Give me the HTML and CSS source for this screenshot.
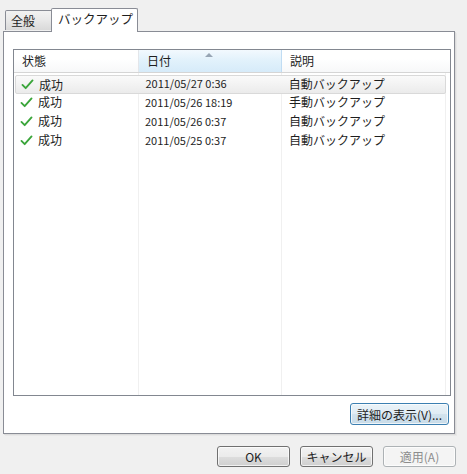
FILE: index.html
```html
<!DOCTYPE html>
<html lang="ja">
<head>
    <meta charset="UTF-8">
    <title>バックアップ</title>
    <link rel="stylesheet" href="styles.css">
</head>
<body>
    <div class="dialog">

        <div class="tabs">
            <div class="tab">全般</div>
            <div class="tab active">バックアップ</div>
        </div>

        <div class="panel">
            <div class="list">
                <div class="list-head">
                    <div class="col c-state">状態</div>
                    <div class="col c-date sorted">日付<span class="sort-arrow"></span></div>
                    <div class="col c-desc">説明</div>
                </div>
                <div class="list-body">
                    <div class="guides">
                        <div class="g c-state"></div>
                        <div class="g c-date"></div>
                        <div class="g c-desc"></div>
                    </div>

                    <div class="row hover">
                        <div class="cell c-state"><svg class="check" viewBox="0 0 14 12"><path d="M1.5 6.5 L5 10 L12.5 1.5" /></svg>成功</div>
                        <div class="cell c-date">2011/05/27 0:36</div>
                        <div class="cell c-desc">自動バックアップ</div>
                    </div>
                    <div class="row">
                        <div class="cell c-state"><svg class="check" viewBox="0 0 14 12"><path d="M1.5 6.5 L5 10 L12.5 1.5" /></svg>成功</div>
                        <div class="cell c-date">2011/05/26 18:19</div>
                        <div class="cell c-desc">手動バックアップ</div>
                    </div>
                    <div class="row">
                        <div class="cell c-state"><svg class="check" viewBox="0 0 14 12"><path d="M1.5 6.5 L5 10 L12.5 1.5" /></svg>成功</div>
                        <div class="cell c-date">2011/05/26 0:37</div>
                        <div class="cell c-desc">自動バックアップ</div>
                    </div>
                    <div class="row">
                        <div class="cell c-state"><svg class="check" viewBox="0 0 14 12"><path d="M1.5 6.5 L5 10 L12.5 1.5" /></svg>成功</div>
                        <div class="cell c-date">2011/05/25 0:37</div>
                        <div class="cell c-desc">自動バックアップ</div>
                    </div>
                </div>
            </div>

            <div class="panel-actions">
                <button class="btn focused wide">詳細の表示(V)...</button>
            </div>
        </div>

        <div class="actions">
            <button class="btn">OK</button>
            <button class="btn">キャンセル</button>
            <button class="btn" disabled>適用(A)</button>
        </div>

    </div>
</body>
</html>
```

FILE: styles.css
```css
body {
    margin: 0;
    background-color: #f0f0f0;
    font-family: "Noto Sans CJK JP", "Liberation Sans", sans-serif;
    font-size: 12px;
    color: #1e1e1e;
}
.dialog {
    width: 467px;
    height: 474px;
    padding: 8px 0 0 3px;
    box-sizing: border-box;
}

/* タブ */
.tabs {
    display: flex;
    align-items: flex-end;
    height: 23px;
    padding-left: 2px;
    position: relative;
    z-index: 1;
}
.tab {
    height: 20px;
    line-height: 19px;
    padding: 0 5px;
    width: 47px;
    box-sizing: border-box;
    border: 1px solid #898c95;
    border-bottom: none;
    background: linear-gradient(#f2f2f2, #e8e8e8 50%, #d9d9d9);
    border-radius: 2px 0 0 0;
    margin-bottom: 1px;
    white-space: nowrap;
}
.tab.active {
    width: 87px;
    height: 24px;
    margin-bottom: -1px;
    margin-left: -1px;
    padding: 0 6px;
    line-height: 20px;
    font-size: 12.5px;
    background: #fff;
    border-radius: 2px 2px 0 0;
}

/* 白いパネル */
.panel {
    width: 452px;
    height: 403px;
    box-sizing: border-box;
    border: 1px solid #898c95;
    background: #fff;
    padding: 17px 4px 0 9px;
    box-shadow: 1px 1px 0 #dcdcdc, 2px 2px 0 #e8e8e8;
}
.list {
    width: 438px;
    height: 347px;
    box-sizing: border-box;
    border: 1px solid #828790;
    display: flex;
    flex-direction: column;
}
.list-head {
    display: flex;
    height: 22px;
    border-bottom: 1px solid #d5d5d5;
    background: linear-gradient(#fff, #fff 40%, #f7f8f9);
}
.col {
    position: relative;
    line-height: 22px;
    padding-left: 8px;
    box-sizing: border-box;
    border-right: 1px solid #e3e6ea;
}
.col.sorted {
    background: linear-gradient(#f2f9fe, #e1f1fb 50%, #d6ebf9);
    border-right-color: #c0dcf3;
}
.sort-arrow {
    position: absolute;
    left: 66px;
    top: 3px;
    width: 0;
    height: 0;
    border-left: 4px solid transparent;
    border-right: 4px solid transparent;
    border-bottom: 4px solid #97a5b4;
}
.c-state { width: 125px; }
.c-date { width: 143px; }
.c-desc { width: 164px; }
.col.c-desc { border-right: none; }

.list-body {
    flex: 1;
    position: relative;
    padding-top: 2px;
}
.guides {
    position: absolute;
    inset: 0;
    display: flex;
}
.g {
    border-right: 1px solid #f0f0f0;
    box-sizing: border-box;
}
.row {
    position: relative;
    display: flex;
    height: 19px;
    margin: 0 4px 0 1px;
    box-sizing: border-box;
}
.row.hover {
    border: 1px solid #d9d9d9;
    border-radius: 2px;
    background: linear-gradient(#fafafa, #ebebeb);
    height: 19px;
}
.cell {
    line-height: 16px;
    padding-left: 7px;
    box-sizing: border-box;
    white-space: nowrap;
}
.row.hover .cell { line-height: 15px; }
.row .c-state { width: 124px; height: 16px; padding-left: 5px; display: flex; align-items: center; }
.row .c-date { font-size: 11px; padding-left: 6px; }
.check {
    width: 13px;
    height: 11px;
    margin-right: 5px;
    fill: none;
    stroke: #3aa53a;
    stroke-width: 2;
    stroke-linecap: round;
    stroke-linejoin: round;
}

.panel-actions {
    display: flex;
    justify-content: flex-end;
    padding: 7px 1px 0 0;
}

/* ボタン */
.btn {
    font-family: inherit;
    font-size: 12px;
    color: #1e1e1e;
    width: 73px;
    height: 21px;
    padding: 0;
    border: 1px solid #707070;
    border-radius: 3px;
    background: linear-gradient(#f2f2f2, #ebebeb 50%, #dddddd 51%, #cfcfcf);
    box-shadow: inset 0 0 0 1px rgba(255, 255, 255, 0.7);
}
.btn.wide {
    width: 99px;
    height: 22px;
}
.btn.focused {
    border-color: #3c7fb1;
    background: linear-gradient(#eaf3f9, #e1ecf4 50%, #d3e3ee 51%, #c8dbe8);
}
.btn:disabled {
    color: #8d8d8d;
    border-color: #adb2b5;
    background: #f4f4f4;
}
.actions {
    display: flex;
    justify-content: flex-end;
    gap: 10px;
    padding: 12px 11px 0 0;
}
```
